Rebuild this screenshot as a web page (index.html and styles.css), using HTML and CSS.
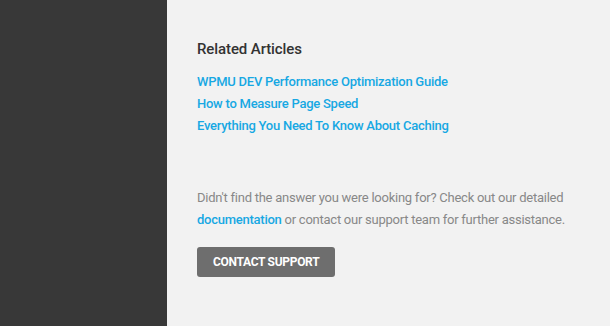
FILE: index.html
```html
<!DOCTYPE html>
<html>
<head>
<meta charset="utf-8">
<link rel="stylesheet" href="styles.css">
</head>
<body>
<div class="layout">
  <aside class="sidebar"></aside>
  <main class="content">
    <h2 class="title">Related Articles</h2>
    <ul class="links">
      <li><a href="#">WPMU DEV Performance Optimization Guide</a></li>
      <li><a href="#">How to Measure Page Speed</a></li>
      <li><a href="#">Everything You Need To Know About Caching</a></li>
    </ul>
    <p class="help">Didn't find the answer you were looking for? Check out our detailed <a href="#">documentation</a> or contact our support team for further assistance.</p>
    <button class="btn">CONTACT SUPPORT</button>
  </main>
</div>
</body>
</html>
```
FILE: styles.css
```css
html, body { margin: 0; padding: 0; }
body { font-family: Roboto, "Liberation Sans", sans-serif; background: #f2f2f2; }
.layout { display: flex; width: 610px; height: 326px; }
.sidebar { width: 167px; background: #383838; flex: none; }
.content { padding: 38px 30px 0 30px; width: 383px; }
.title { margin: 0; font-size: 15px; font-weight: 500; color: #333; line-height: 22px; letter-spacing: -0.1px; }
.links { list-style: none; margin: 11px 0 0 0; padding: 0; }
.links li { line-height: 22px; font-size: 13px; letter-spacing: -0.25px; }
.links a, .help a { color: #17a8e3; text-decoration: none; font-weight: 500; }
.help { margin: 50px 0 0 0; font-size: 13px; line-height: 22px; color: #888; letter-spacing: -0.25px; }
.btn { display: block; margin-top: 16px; height: 30px; padding: 0 16px; background: #6e6e6e; color: #fff; border: none; border-radius: 3px; font-family: Roboto, "Liberation Sans", sans-serif; font-size: 12px; font-weight: 700; letter-spacing: -0.3px; }
```
